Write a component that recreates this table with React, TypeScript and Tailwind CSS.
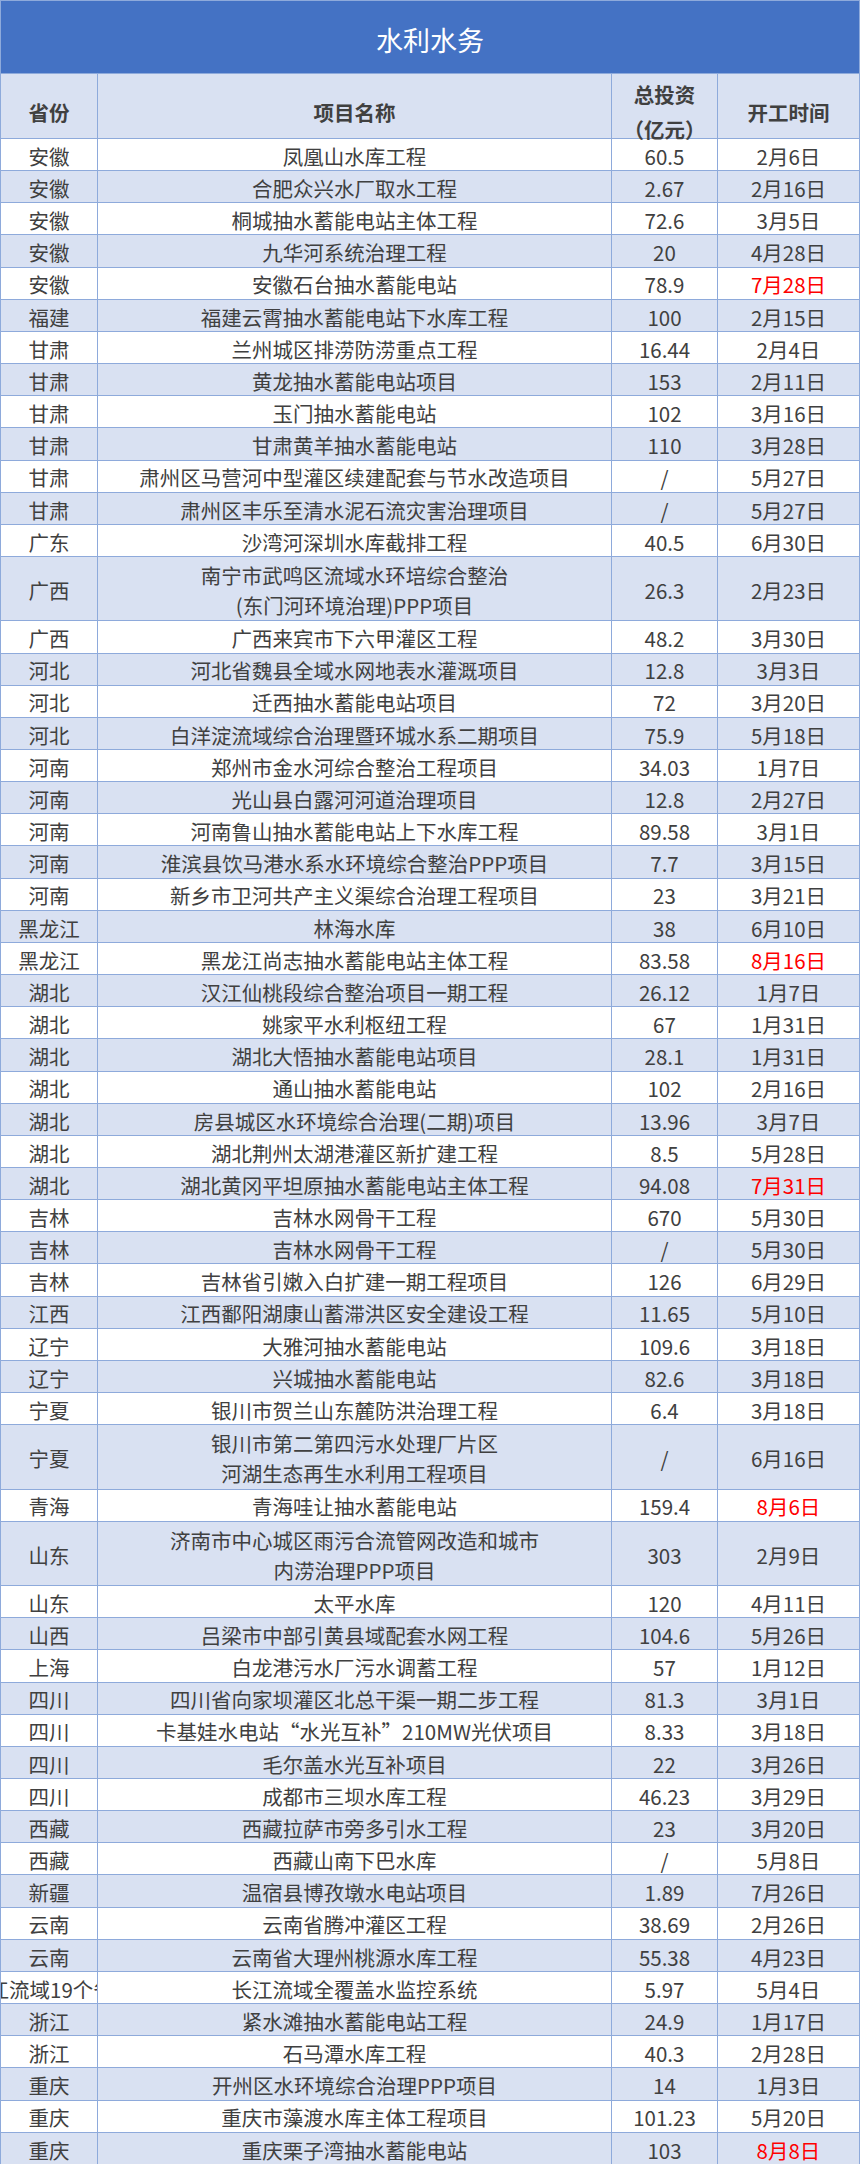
type Row = {
  prov: string;
  name: string | string[];
  invest: string;
  date: string;
  red?: boolean;
  clip?: boolean;
};

const rows: Row[] = [
  { prov: "安徽", name: "凤凰山水库工程", invest: "60.5", date: "2月6日" },
  { prov: "安徽", name: "合肥众兴水厂取水工程", invest: "2.67", date: "2月16日" },
  { prov: "安徽", name: "桐城抽水蓄能电站主体工程", invest: "72.6", date: "3月5日" },
  { prov: "安徽", name: "九华河系统治理工程", invest: "20", date: "4月28日" },
  { prov: "安徽", name: "安徽石台抽水蓄能电站", invest: "78.9", date: "7月28日", red: true },
  { prov: "福建", name: "福建云霄抽水蓄能电站下水库工程", invest: "100", date: "2月15日" },
  { prov: "甘肃", name: "兰州城区排涝防涝重点工程", invest: "16.44", date: "2月4日" },
  { prov: "甘肃", name: "黄龙抽水蓄能电站项目", invest: "153", date: "2月11日" },
  { prov: "甘肃", name: "玉门抽水蓄能电站", invest: "102", date: "3月16日" },
  { prov: "甘肃", name: "甘肃黄羊抽水蓄能电站", invest: "110", date: "3月28日" },
  { prov: "甘肃", name: "肃州区马营河中型灌区续建配套与节水改造项目", invest: "/", date: "5月27日" },
  { prov: "甘肃", name: "肃州区丰乐至清水泥石流灾害治理项目", invest: "/", date: "5月27日" },
  { prov: "广东", name: "沙湾河深圳水库截排工程", invest: "40.5", date: "6月30日" },
  { prov: "广西", name: ["南宁市武鸣区流域水环培综合整治", "(东门河环境治理)PPP项目"], invest: "26.3", date: "2月23日" },
  { prov: "广西", name: "广西来宾市下六甲灌区工程", invest: "48.2", date: "3月30日" },
  { prov: "河北", name: "河北省魏县全域水网地表水灌溉项目", invest: "12.8", date: "3月3日" },
  { prov: "河北", name: "迁西抽水蓄能电站项目", invest: "72", date: "3月20日" },
  { prov: "河北", name: "白洋淀流域综合治理暨环城水系二期项目", invest: "75.9", date: "5月18日" },
  { prov: "河南", name: "郑州市金水河综合整治工程项目", invest: "34.03", date: "1月7日" },
  { prov: "河南", name: "光山县白露河河道治理项目", invest: "12.8", date: "2月27日" },
  { prov: "河南", name: "河南鲁山抽水蓄能电站上下水库工程", invest: "89.58", date: "3月1日" },
  { prov: "河南", name: "淮滨县饮马港水系水环境综合整治PPP项目", invest: "7.7", date: "3月15日" },
  { prov: "河南", name: "新乡市卫河共产主义渠综合治理工程项目", invest: "23", date: "3月21日" },
  { prov: "黑龙江", name: "林海水库", invest: "38", date: "6月10日" },
  { prov: "黑龙江", name: "黑龙江尚志抽水蓄能电站主体工程", invest: "83.58", date: "8月16日", red: true },
  { prov: "湖北", name: "汉江仙桃段综合整治项目一期工程", invest: "26.12", date: "1月7日" },
  { prov: "湖北", name: "姚家平水利枢纽工程", invest: "67", date: "1月31日" },
  { prov: "湖北", name: "湖北大悟抽水蓄能电站项目", invest: "28.1", date: "1月31日" },
  { prov: "湖北", name: "通山抽水蓄能电站", invest: "102", date: "2月16日" },
  { prov: "湖北", name: "房县城区水环境综合治理(二期)项目", invest: "13.96", date: "3月7日" },
  { prov: "湖北", name: "湖北荆州太湖港灌区新扩建工程", invest: "8.5", date: "5月28日" },
  { prov: "湖北", name: "湖北黄冈平坦原抽水蓄能电站主体工程", invest: "94.08", date: "7月31日", red: true },
  { prov: "吉林", name: "吉林水网骨干工程", invest: "670", date: "5月30日" },
  { prov: "吉林", name: "吉林水网骨干工程", invest: "/", date: "5月30日" },
  { prov: "吉林", name: "吉林省引嫩入白扩建一期工程项目", invest: "126", date: "6月29日" },
  { prov: "江西", name: "江西鄱阳湖康山蓄滞洪区安全建设工程", invest: "11.65", date: "5月10日" },
  { prov: "辽宁", name: "大雅河抽水蓄能电站", invest: "109.6", date: "3月18日" },
  { prov: "辽宁", name: "兴城抽水蓄能电站", invest: "82.6", date: "3月18日" },
  { prov: "宁夏", name: "银川市贺兰山东麓防洪治理工程", invest: "6.4", date: "3月18日" },
  { prov: "宁夏", name: ["银川市第二第四污水处理厂片区", "河湖生态再生水利用工程项目"], invest: "/", date: "6月16日" },
  { prov: "青海", name: "青海哇让抽水蓄能电站", invest: "159.4", date: "8月6日", red: true },
  { prov: "山东", name: ["济南市中心城区雨污合流管网改造和城市", "内涝治理PPP项目"], invest: "303", date: "2月9日" },
  { prov: "山东", name: "太平水库", invest: "120", date: "4月11日" },
  { prov: "山西", name: "吕梁市中部引黄县域配套水网工程", invest: "104.6", date: "5月26日" },
  { prov: "上海", name: "白龙港污水厂污水调蓄工程", invest: "57", date: "1月12日" },
  { prov: "四川", name: "四川省向家坝灌区北总干渠一期二步工程", invest: "81.3", date: "3月1日" },
  { prov: "四川", name: "卡基娃水电站“水光互补”210MW光伏项目", invest: "8.33", date: "3月18日" },
  { prov: "四川", name: "毛尔盖水光互补项目", invest: "22", date: "3月26日" },
  { prov: "四川", name: "成都市三坝水库工程", invest: "46.23", date: "3月29日" },
  { prov: "西藏", name: "西藏拉萨市旁多引水工程", invest: "23", date: "3月20日" },
  { prov: "西藏", name: "西藏山南下巴水库", invest: "/", date: "5月8日" },
  { prov: "新疆", name: "温宿县博孜墩水电站项目", invest: "1.89", date: "7月26日" },
  { prov: "云南", name: "云南省腾冲灌区工程", invest: "38.69", date: "2月26日" },
  { prov: "云南", name: "云南省大理州桃源水库工程", invest: "55.38", date: "4月23日" },
  { prov: "长江流域19个省", name: "长江流域全覆盖水监控系统", invest: "5.97", date: "5月4日", clip: true },
  { prov: "浙江", name: "紧水滩抽水蓄能电站工程", invest: "24.9", date: "1月17日" },
  { prov: "浙江", name: "石马潭水库工程", invest: "40.3", date: "2月28日" },
  { prov: "重庆", name: "开州区水环境综合治理PPP项目", invest: "14", date: "1月3日" },
  { prov: "重庆", name: "重庆市藻渡水库主体工程项目", invest: "101.23", date: "5月20日" },
  { prov: "重庆", name: "重庆栗子湾抽水蓄能电站", invest: "103", date: "8月8日", red: true },
];

const cell = "flex items-center justify-center text-center pt-[3px]";

function DataRow({ row, index }: { row: Row; index: number }) {
  const double = Array.isArray(row.name);
  const bg = index % 2 === 0 ? "bg-white" : "bg-[#d9e1f2]";
  return (
    <div
      className={`grid grid-cols-[97px_514px_106px_1fr] border-b border-[#8eaadb] ${bg} ${
        double ? "h-[64.32px]" : "h-[32.16px]"
      }`}
    >
      {row.clip ? (
        <div className="flex items-center overflow-hidden whitespace-nowrap border-r border-[#8eaadb] pt-[3px]">
          <span className="ml-[-33px] shrink-0">{row.prov}</span>
        </div>
      ) : (
        <div className={`${cell} border-r border-[#8eaadb]`}>{row.prov}</div>
      )}
      <div className={`${cell} border-r border-[#8eaadb] whitespace-nowrap`}>
        {double ? (
          <div className="flex flex-col leading-[30px]">
            {(row.name as string[]).map((line) => (
              <span key={line}>{line}</span>
            ))}
          </div>
        ) : (
          row.name
        )}
      </div>
      <div className={`${cell} border-r border-[#8eaadb]`}>{row.invest}</div>
      <div className={`${cell} ${row.red ? "text-[#ff0000]" : ""}`}>{row.date}</div>
    </div>
  );
}

export default function App() {
  return (
    <div className="w-[860px] font-['Noto_Sans_CJK_SC',sans-serif] text-[20.5px] leading-none text-[#404040]">
      <div className="border-x border-t border-[#8eaadb]">
        <div className="flex h-[73px] items-center justify-center border-b border-[#8eaadb] bg-[#4472c4] pt-[5px] text-[27px] text-white">
          水利水务
        </div>
        <div className="grid h-[65px] grid-cols-[97px_514px_106px_1fr] border-b border-[#8eaadb] bg-[#d9e1f2] font-bold">
          <div className={`${cell} border-r border-[#8eaadb]`}>省份</div>
          <div className={`${cell} border-r border-[#8eaadb]`}>项目名称</div>
          <div className={`${cell} border-r border-[#8eaadb] flex-col leading-[35px]`}>
            <span>总投资</span>
            <span>（亿元）</span>
          </div>
          <div className={cell}>开工时间</div>
        </div>
        {rows.map((row, i) => (
          <DataRow key={i} row={row} index={i} />
        ))}
      </div>
    </div>
  );
}
